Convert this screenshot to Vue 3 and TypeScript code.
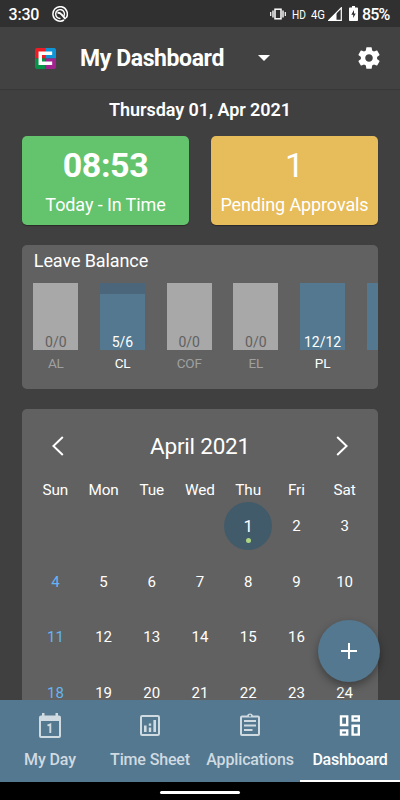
<script setup lang="ts">
interface Leave {
  code: string
  used: number
  total: number
}

interface Tab {
  label: string
  icon: 'day' | 'sheet' | 'apps' | 'dash'
}

const leaves: Leave[] = [
  { code: 'AL', used: 0, total: 0 },
  { code: 'CL', used: 5, total: 6 },
  { code: 'COF', used: 0, total: 0 },
  { code: 'EL', used: 0, total: 0 },
  { code: 'PL', used: 12, total: 12 },
]

const weekdays: string[] = ['Sun', 'Mon', 'Tue', 'Wed', 'Thu', 'Fri', 'Sat']

// April 2021 starts on a Thursday; four weeks fit above the tab bar
const leadingBlanks = 4
const visibleDays = 24
const today = 1
const cells: (number | null)[] = [
  ...Array.from({ length: leadingBlanks }, () => null),
  ...Array.from({ length: visibleDays }, (_, i) => i + 1),
]

const tabs: Tab[] = [
  { label: 'My Day', icon: 'day' },
  { label: 'Time Sheet', icon: 'sheet' },
  { label: 'Applications', icon: 'apps' },
  { label: 'Dashboard', icon: 'dash' },
]
const activeTab = 'dash'

const fill = (l: Leave): string => (l.total ? `${(l.used / l.total) * 100}%` : '0%')
</script>

<template>
  <div class="screen">
    <header class="status">
      <span class="clock">3:30</span>
      <svg class="app-mark" viewBox="0 0 16 16" fill="none" stroke="#fff">
        <path d="M14.200 11.800A7.200 7.200 0 1 0 12 14" stroke-width="1.500" />
        <path d="M12 10A4.400 4.400 0 1 0 8.500 12.400" stroke-width="1.400" />
        <path d="M5.500 6.700Q8 6.500 9.500 8.500L13.600 13" stroke-width="1.900" />
      </svg>
      <span class="grow"></span>
      <svg class="vibrate" viewBox="0 0 16 12" fill="none" stroke="#fff">
        <rect x="5" y="1.2" width="6" height="9.600" stroke-width="1.500" />
        <path d="M3 2.500v7M13 2.500v7" stroke-width="1.400" />
        <path d="M.7 4v4M15.300 4v4" stroke-width="1.200" />
      </svg>
      <span class="net hd">HD</span>
      <span class="net lte">4G</span>
      <svg class="signal" viewBox="0 0 14 14">
        <path d="M13.300.8V13.300H.8z" fill="none" stroke="#fff" stroke-width="1.200" />
        <path d="M8.500 5.500V13.500H.5z" fill="#fff" />
      </svg>
      <svg class="battery" viewBox="0 0 9 15">
        <path d="M3 0h3v1.600h2.200q.8 0 .8.8v11.800q0 .8-.8.8H.8q-.8 0-.8-.8V2.400q0-.8.8-.8H3z" fill="#fff" />
        <path d="M5 4L2.300 8.800h1.900v3.200L6.700 7.500H5z" fill="#303030" />
      </svg>
      <span class="percent">85%</span>
    </header>

    <div class="appbar">
      <svg class="logo" viewBox="0 0 22 22">
        <rect width="11" height="11" fill="#ed1c24" />
        <rect x="11" width="11" height="11" fill="#0f95d7" />
        <rect y="11" width="11" height="11" fill="#089247" />
        <rect x="11" y="11" width="11" height="11" fill="#a3238e" />
        <path d="M18 5.500H5.500V16H18" fill="none" stroke="#fff" stroke-width="3.600" />
      </svg>
      <h1 class="title">My Dashboard</h1>
      <svg class="caret" viewBox="0 0 12 6"><path d="M0 0h12L6 6z" fill="#fff" /></svg>
      <span class="grow"></span>
      <svg class="gear" viewBox="0 0 24 24">
        <path
          fill="#fff"
          d="M19.430 12.980c.04-.32.07-.64.07-.98s-.03-.66-.07-.98l2.110-1.650c.19-.15.24-.42.12-.64l-2-3.460c-.12-.22-.39-.3-.61-.22l-2.490 1c-.52-.4-1.080-.73-1.690-.98l-.38-2.650C14.460 2.180 14.250 2 14 2h-4c-.25 0-.46.18-.49.42l-.38 2.650c-.61.25-1.170.59-1.690.98l-2.490-1c-.23-.09-.49 0-.61.22l-2 3.460c-.13.22-.07.49.12.64l2.110 1.650c-.04.32-.07.65-.07.98s.03.66.07.98l-2.110 1.650c-.19.15-.24.42-.12.64l2 3.460c.12.22.39.3.61.22l2.490-1c.52.4 1.080.73 1.690.98l.38 2.650c.03.24.24.42.49.42h4c.25 0 .46-.18.49-.42l.38-2.650c.61-.25 1.170-.59 1.690-.98l2.490 1c.23.09.49 0 .61-.22l2-3.460c.12-.22.07-.49-.12-.64l-2.110-1.650zM12 15.500c-1.930 0-3.500-1.570-3.500-3.500s1.570-3.500 3.500-3.500 3.500 1.570 3.500 3.500-1.570 3.500-3.500 3.500z"
        />
      </svg>
    </div>

    <main class="content">
      <p class="date">Thursday 01, Apr 2021</p>

      <section class="tiles">
        <div class="tile green">
          <strong class="value bold">08:53</strong>
          <span class="caption">Today - In Time</span>
        </div>
        <div class="tile amber">
          <span class="value">1</span>
          <span class="caption">Pending Approvals</span>
        </div>
      </section>

      <section class="panel leave">
        <h2 class="leave-title">Leave Balance</h2>
        <div class="bars">
          <div v-for="l in leaves" :key="l.code" class="leave-item" :class="{ empty: !l.total }">
            <div class="bar">
              <div class="level" :style="{ height: fill(l) }"></div>
              <span class="ratio">{{ l.used }}/{{ l.total }}</span>
            </div>
            <span class="code">{{ l.code }}</span>
          </div>
          <div class="leave-item">
            <div class="bar"><div class="level full"></div></div>
          </div>
        </div>
      </section>

      <section class="panel calendar">
        <div class="month">
          <svg class="arrow" viewBox="0 0 12 20"><path d="M10.800 1L1.400 10l9.400 9" /></svg>
          <span class="month-name">April 2021</span>
          <svg class="arrow" viewBox="0 0 12 20"><path d="M1.200 1l9.400 9-9.400 9" /></svg>
        </div>
        <div class="week">
          <span v-for="d in weekdays" :key="d">{{ d }}</span>
        </div>
        <div class="days">
          <div v-for="(c, i) in cells" :key="i" class="day" :class="{ sunday: i % 7 === 0 }">
            <span v-if="c" class="num" :class="{ today: c === today }">{{ c }}</span>
          </div>
        </div>
      </section>
    </main>

    <button class="fab" aria-label="Add">
      <svg viewBox="0 0 16 16"><path d="M8 0v16M0 8h16" stroke="#fff" stroke-width="2" /></svg>
    </button>

    <nav class="tabs">
      <div v-for="t in tabs" :key="t.icon" class="tab" :class="{ active: t.icon === activeTab }">
        <svg v-if="t.icon === 'day'" class="tab-icon" viewBox="0 0 26 26">
          <path
            fill-rule="evenodd"
            fill="currentColor"
            d="M5 0h2.500v2.500h11V0H21v2.500h1q2 0 2 2V23q0 2-2 2H4q-2 0-2-2V4.500q0-2 2-2h1zM4 8v15h18V8z"
          />
          <path d="M10.500 12.700l2.800-1.300V20" fill="none" stroke="currentColor" stroke-width="1.900" />
        </svg>
        <svg v-else-if="t.icon === 'sheet'" class="tab-icon" viewBox="0 0 26 26">
          <rect x="4" y="3" width="18" height="19" rx="1.200" fill="none" stroke="currentColor" stroke-width="2" />
          <path
            fill="currentColor"
            d="M7 12.500h2.600V19H7zM11.800 10.500h2.400v2.300h-2.400zM11.800 14.500h2.400V19h-2.400zM16.400 7H19v12h-2.600z"
          />
        </svg>
        <svg v-else-if="t.icon === 'apps'" class="tab-icon" viewBox="0 0 26 26">
          <path
            fill-rule="evenodd"
            fill="currentColor"
            d="M5 2.500h5a3.200 3.200 0 0 1 6 0h5q2 0 2 2V21q0 2-2 2H5q-2 0-2-2V4.500q0-2 2-2zM5 4.500V21h16V4.500zM13 1.700a1 1 0 1 0 0 2 1 1 0 0 0 0-2z"
          />
          <path d="M7 8h12M7 12.500h12M7 17h8.500" stroke="currentColor" stroke-width="2" />
        </svg>
        <svg v-else class="tab-icon" viewBox="0 0 26 26" fill="none" stroke="currentColor" stroke-width="2.400">
          <path d="M4 3.400h6.200v8.600H4zM15.600 3.400h6.200v4.100h-6.200zM15.600 12.800h6.200v8.800h-6.200zM4 17.400h6.200v4.200H4z" />
        </svg>
        <span class="tab-label">{{ t.label }}</span>
      </div>
    </nav>

    <footer class="gesture"><span class="pill"></span></footer>
  </div>
</template>

<style>
body {
  margin: 0;
  background: #404040;
  overflow: hidden;
}
</style>

<style scoped>
.screen {
  position: relative;
  display: flex;
  flex-direction: column;
  width: 400px;
  height: 800px;
  overflow: hidden;
  background: #404040;
  color: #fff;
  font-family: Roboto, 'Liberation Sans', sans-serif;
}
.grow {
  flex: 1;
}
.status {
  display: flex;
  align-items: center;
  flex: none;
  box-sizing: border-box;
  height: 27px;
  padding: 0 9px 0 8.500px;
  background: #303030;
}
.clock {
  width: 31.500px;
  margin-top: 1px;
  font-size: 16px;
  font-weight: 500;
  letter-spacing: -0.2px;
}
.app-mark {
  width: 16px;
  height: 16px;
  margin-left: 11.500px;
}
.vibrate {
  width: 16px;
  height: 12px;
}
.net {
  font-size: 13.500px;
  transform-origin: left;
}
.hd {
  width: 15px;
  margin-left: 6px;
  transform: scaleX(0.75);
}
.lte {
  width: 16px;
  margin-left: 4px;
  transform: scaleX(0.84);
}
.signal {
  width: 14px;
  height: 14px;
  margin-left: 1px;
}
.battery {
  width: 9px;
  height: 15px;
  margin-left: 7px;
}
.percent {
  width: 29px;
  margin: 1px 0 0 4px;
  font-size: 16px;
  font-weight: 500;
  letter-spacing: -0.8px;
}
.appbar {
  display: flex;
  align-items: center;
  flex: none;
  box-sizing: border-box;
  height: 62px;
  padding: 0 18px 0 35px;
  background: #424242;
  box-shadow: 0 1px 1px rgba(0, 0, 0, 0.12);
  z-index: 1;
}
.logo {
  width: 21px;
  height: 21px;
  border-radius: 2px;
}
.title {
  width: 144px;
  margin: 2px 33.500px 0 24px;
  font-size: 23px;
  font-weight: 700;
  letter-spacing: -0.4px;
  line-height: 28px;
  white-space: nowrap;
}
.caret {
  width: 12px;
  height: 6px;
}
.gear {
  width: 26px;
  height: 26px;
}
.content {
  display: flex;
  flex-direction: column;
  flex: 1;
  min-height: 0;
  padding: 0 22px;
  overflow: hidden;
}
.date {
  flex: none;
  margin: 10px 0 15px;
  font-size: 18px;
  font-weight: 600;
  letter-spacing: -0.07px;
  line-height: 22px;
  text-align: center;
}
.tiles {
  display: flex;
  flex: none;
  gap: 22px;
}
.tile {
  display: flex;
  flex: 1;
  flex-direction: column;
  align-items: center;
  height: 89px;
  border-radius: 5px;
  white-space: nowrap;
  box-shadow: 0 1px 1px rgba(0, 0, 0, 0.35);
}
.green {
  background: #64c36d;
}
.amber {
  background: #e7bc5a;
}
.value {
  margin-top: 9px;
  font-size: 34px;
  line-height: 40px;
}
.bold {
  font-weight: 700;
  letter-spacing: -0.4px;
}
.caption {
  margin-top: 8px;
  font-size: 18px;
  letter-spacing: -0.1px;
  line-height: 24px;
}
.panel {
  flex: none;
  box-sizing: border-box;
  border-radius: 5px;
  background: #616161;
  overflow: hidden;
}
.leave {
  height: 144px;
  margin-top: 20px;
  padding: 5px 0 0 11.300px;
}
.leave-title {
  margin: 0 0 0 0.500px;
  font-size: 18px;
  font-weight: 400;
  letter-spacing: -0.1px;
  line-height: 22px;
}
.bars {
  display: flex;
  gap: 21.700px;
  margin-top: 11px;
}
.leave-item {
  display: flex;
  flex: none;
  flex-direction: column;
  width: 45px;
  text-align: center;
}
.bar {
  position: relative;
  display: flex;
  flex-direction: column;
  justify-content: flex-end;
  height: 67px;
  background: #4b667a;
}
.empty .bar {
  background: #a8a8a8;
}
.level {
  background: #53788f;
}
.full {
  height: 100%;
}
.ratio {
  position: absolute;
  inset: auto 0 -1px;
  font-size: 14px;
  line-height: 17px;
}
.code {
  margin-top: 5px;
  font-size: 13.500px;
  letter-spacing: -0.2px;
  line-height: 17px;
}
.empty .ratio {
  color: #616161;
}
.empty .code {
  color: #a0a0a0;
}
.calendar {
  height: 360px;
  margin-top: 20px;
  padding: 22px 9.300px 0;
}
.month {
  display: flex;
  align-items: center;
  justify-content: space-between;
  height: 30px;
  padding: 0 20.700px;
}
.arrow {
  width: 12px;
  height: 20px;
  fill: none;
  stroke: #fff;
  stroke-width: 2;
}
.month-name {
  margin-top: -1px;
  font-size: 22.500px;
  letter-spacing: -0.2px;
}
.week,
.days {
  display: grid;
  grid-template-columns: repeat(7, 1fr);
  text-align: center;
}
.week {
  margin-top: 19px;
  font-size: 15.300px;
  letter-spacing: -0.1px;
  line-height: 20px;
}
.days {
  grid-auto-rows: 55.500px;
  margin-top: -2px;
}
.day {
  display: flex;
  align-items: center;
  justify-content: center;
  font-size: 15px;
  line-height: 18px;
}
.sunday {
  color: #64b5f6;
}
.num {
  position: relative;
  top: 0.500px;
}
.today {
  top: 0;
  width: 48px;
  height: 48px;
  border-radius: 50%;
  background: #415b6a;
  font-size: 17px;
  line-height: 48px;
}
.today::after {
  content: '';
  position: absolute;
  left: 21.500px;
  bottom: 7px;
  width: 5px;
  height: 5px;
  border-radius: 50%;
  background: #aed581;
}
.fab {
  position: absolute;
  right: 20px;
  bottom: 118px;
  display: flex;
  align-items: center;
  justify-content: center;
  width: 62px;
  height: 62px;
  padding: 0;
  border: 0;
  border-radius: 50%;
  background: #53788f;
  box-shadow: 0 4px 8px rgba(0, 0, 0, 0.35);
}
.fab svg {
  width: 16px;
  height: 16px;
}
.tabs {
  position: relative;
  display: flex;
  flex: none;
  height: 82px;
  background: #53788f;
}
.tab {
  display: flex;
  flex: 1;
  flex-direction: column;
  align-items: center;
  box-sizing: border-box;
  min-width: 0;
  padding-top: 13px;
  border-bottom: 2px solid transparent;
  color: #d0dae1;
}
.active {
  border-color: #fff;
  color: #fff;
}
.tab-icon {
  flex: none;
  width: 26px;
  height: 26px;
}
.tab-label {
  margin-top: 11px;
  font-size: 16px;
  font-weight: 500;
  letter-spacing: -0.14px;
  line-height: 20px;
  white-space: nowrap;
}
.active .tab-label {
  letter-spacing: -0.25px;
}
.gesture {
  display: flex;
  flex: none;
  justify-content: center;
  box-sizing: border-box;
  height: 18px;
  padding-top: 9px;
  background: #000;
}
.pill {
  width: 80px;
  height: 3px;
  border-radius: 2px;
  background: #fff;
}
</style>
